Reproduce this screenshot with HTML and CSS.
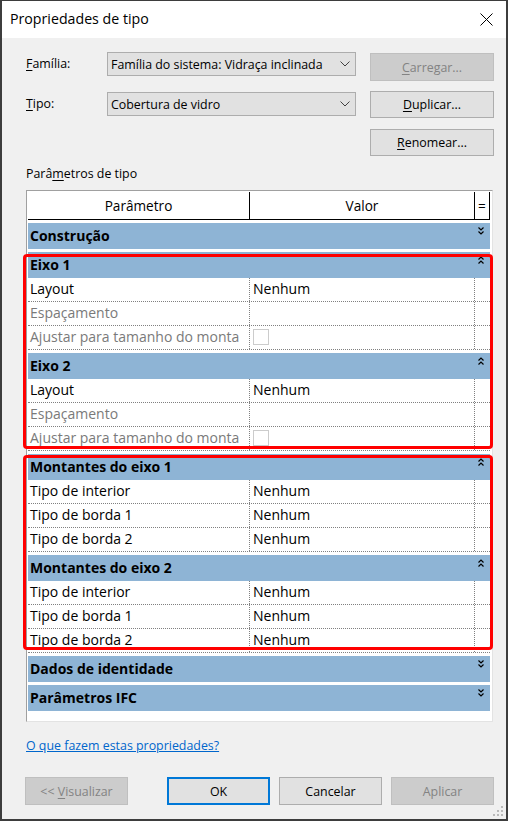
FILE: index.html
```html
<!DOCTYPE html>
<html lang="pt">
<head>
<meta charset="utf-8">
<title>Propriedades de tipo</title>
<link rel="stylesheet" href="styles.css">
</head>
<body>
<div class="window">
  <div class="titlebar">
    <span class="title">Propriedades de tipo</span>
    <svg class="close" width="13" height="13" viewBox="0 0 13 13"><path d="M0.5 0.5 L12.5 12.5 M12.5 0.5 L0.5 12.5" stroke="#000" stroke-width="1" fill="none"/></svg>
  </div>
  <div class="content">
    <div class="form">
      <div class="lbl"><u>F</u>amília:</div>
      <div class="combo"><span>Família do sistema: Vidraça inclinada</span><svg width="10" height="6" viewBox="0 0 10 6"><polyline points="0.5,0.5 5,5 9.5,0.5" stroke="#404040" fill="none"/></svg></div>
      <button class="btn btn-top btn-disabled first"><u>C</u>arregar...</button>

      <div class="lbl lbl2"><u>T</u>ipo:</div>
      <div class="combo combo2"><span>Cobertura de vidro</span><svg width="10" height="6" viewBox="0 0 10 6"><polyline points="0.5,0.5 5,5 9.5,0.5" stroke="#404040" fill="none"/></svg></div>
      <button class="btn btn-top"><u>D</u>uplicar...</button>

      <div></div>
      <div></div>
      <button class="btn btn-top"><u>R</u>enomear...</button>
    </div>

    <div class="section-label">Parâ<u>m</u>etros de tipo</div>

    <div class="table">
      <div class="row head">
        <div class="cell">Parâmetro</div>
        <div class="cell">Valor</div>
        <div class="cell">=</div>
      </div>

      <div class="group"><span>Construção</span><svg class="chev" width="6" height="8" viewBox="0 0 6 8"><polyline points="0.5,0.5 3,3 5.5,0.5"/><polyline points="0.5,4.5 3,7 5.5,4.5"/></svg></div>

      <div class="hl hl1">
        <div class="group"><span>Eixo 1</span><svg class="chev" width="6" height="8" viewBox="0 0 6 8"><polyline points="0.5,3.5 3,1 5.5,3.5"/><polyline points="0.5,7.5 3,5 5.5,7.5"/></svg></div>
        <div class="row"><div class="cell">Layout</div><div class="cell">Nenhum</div><div class="cell"></div></div>
        <div class="row dim"><div class="cell">Espaçamento</div><div class="cell"></div><div class="cell"></div></div>
        <div class="row dim"><div class="cell">Ajustar para tamanho do monta</div><div class="cell"><span class="check"></span></div><div class="cell"></div></div>

        <div class="group"><span>Eixo 2</span><svg class="chev" width="6" height="8" viewBox="0 0 6 8"><polyline points="0.5,3.5 3,1 5.5,3.5"/><polyline points="0.5,7.5 3,5 5.5,7.5"/></svg></div>
        <div class="row"><div class="cell">Layout</div><div class="cell">Nenhum</div><div class="cell"></div></div>
        <div class="row dim"><div class="cell">Espaçamento</div><div class="cell"></div><div class="cell"></div></div>
        <div class="row dim"><div class="cell">Ajustar para tamanho do monta</div><div class="cell"><span class="check"></span></div><div class="cell"></div></div>
      </div>

      <div class="hl hl2">
        <div class="group"><span>Montantes do eixo 1</span><svg class="chev" width="6" height="8" viewBox="0 0 6 8"><polyline points="0.5,3.5 3,1 5.5,3.5"/><polyline points="0.5,7.5 3,5 5.5,7.5"/></svg></div>
        <div class="row"><div class="cell">Tipo de interior</div><div class="cell">Nenhum</div><div class="cell"></div></div>
        <div class="row"><div class="cell">Tipo de borda 1</div><div class="cell">Nenhum</div><div class="cell"></div></div>
        <div class="row"><div class="cell">Tipo de borda 2</div><div class="cell">Nenhum</div><div class="cell"></div></div>

        <div class="group"><span>Montantes do eixo 2</span><svg class="chev" width="6" height="8" viewBox="0 0 6 8"><polyline points="0.5,3.5 3,1 5.5,3.5"/><polyline points="0.5,7.5 3,5 5.5,7.5"/></svg></div>
        <div class="row"><div class="cell">Tipo de interior</div><div class="cell">Nenhum</div><div class="cell"></div></div>
        <div class="row"><div class="cell">Tipo de borda 1</div><div class="cell">Nenhum</div><div class="cell"></div></div>
        <div class="row"><div class="cell">Tipo de borda 2</div><div class="cell">Nenhum</div><div class="cell"></div></div>
      </div>

      <div class="group"><span>Dados de identidade</span><svg class="chev" width="6" height="8" viewBox="0 0 6 8"><polyline points="0.5,0.5 3,3 5.5,0.5"/><polyline points="0.5,4.5 3,7 5.5,4.5"/></svg></div>
      <div class="group"><span>Parâmetros IFC</span><svg class="chev" width="6" height="8" viewBox="0 0 6 8"><polyline points="0.5,0.5 3,3 5.5,0.5"/><polyline points="0.5,4.5 3,7 5.5,4.5"/></svg></div>
    </div>

    <a class="link" href="#">O que fazem estas propriedades?</a>

    <div class="footer">
      <button class="btn btn-disabled">&lt;&lt; <u>V</u>isualizar</button>
      <button class="btn btn-default">OK</button>
      <button class="btn">Cancelar</button>
      <button class="btn btn-disabled">Aplicar</button>
    </div>
  </div>
  <svg class="grip" width="11" height="11" viewBox="0 0 11 11">
    <rect x="8" y="0" width="2" height="2"/>
    <rect x="4" y="4" width="2" height="2"/><rect x="8" y="4" width="2" height="2"/>
    <rect x="0" y="8" width="2" height="2"/><rect x="4" y="8" width="2" height="2"/><rect x="8" y="8" width="2" height="2"/>
  </svg>
</div>
</body>
</html>
```

FILE: styles.css
```css
* { box-sizing: border-box; }
html, body { margin: 0; padding: 0; }
body {
  font-family: "Open Sans", "Noto Sans", sans-serif;
  font-size: 12.4px;
  color: #000;
  background: #f0f0f0;
}
u { text-decoration: underline; text-underline-offset: 2px; }

.window {
  position: relative;
  width: 508px;
  height: 821px;
  border: 2px solid #3d3d3d;
  border-top-width: 1px;
  background: #f0f0f0;
  display: flex;
  flex-direction: column;
}

.titlebar {
  height: 37px;
  background: #fff;
  display: flex;
  align-items: center;
  justify-content: space-between;
  padding: 0 13px 0 8px;
  flex: none;
}
.title { font-size: 14.2px; line-height: 20px; margin-top: -1px; }
.close { display: block; margin-top: 0; }

.content {
  padding: 14px 12px 0 24px;
  display: flex;
  flex-direction: column;
}

.form {
  display: grid;
  grid-template-columns: 81px 249px 138px;
  grid-template-rows: 29px 28px 27px;
  row-gap: 10px;
}
.lbl { line-height: 24px; align-self: start; }
.lbl2 { margin-top: 1px; }
.combo {
  align-self: start;
  height: 24px;
  background: #e1e1e1;
  border: 1px solid #adadad;
  display: flex;
  align-items: center;
  justify-content: space-between;
  padding: 0 5px 0 3px;
  white-space: nowrap;
}
.combo2 { margin-top: 1px; }
.combo svg { display: block; flex: none; }

.btn {
  font: inherit;
  color: #000;
  background: #e1e1e1;
  border: 1px solid #adadad;
  padding: 0;
  margin: 0;
  height: 28px;
  width: 103px;
}
.btn-top {
  justify-self: end;
  align-self: start;
  width: 124px;
  height: 27px;
}
.btn-top.first { height: 28px; margin-top: 1px; }
.btn-disabled {
  background: #cccccc;
  border-color: #bfbfbf;
  color: #838383;
}
.btn-default { border: 2px solid #0078d7; }

.section-label { margin-top: 10px; line-height: 16px; }

.table {
  margin-top: 8px;
  width: 467px;
  height: 532px;
  background: #fff;
  border-top: 1px solid #a0a0a0;
  border-left: 1px solid #a0a0a0;
  border-right: 1px solid #e3e3e3;
  border-bottom: 1px solid #e3e3e3;
  padding: 1px 2px 1px 1px;
}

.row {
  display: grid;
  grid-template-columns: 222px 225px 15px;
  height: 24px;
  border-bottom: 1px dotted #808080;
  font-size: 14px;
}
.row .cell {
  border-right: 1px dotted #808080;
  line-height: 22px;
  padding-left: 2px;
  white-space: nowrap;
  overflow: hidden;
}
.row .cell:last-child { border-right: none; }
.row .cell:nth-child(2) { padding-left: 3px; }
.row.dim .cell { color: #7a7a7a; }

.row.head {
  height: 28px;
  border-bottom: 1px solid #000;
}
.row.head .cell {
  border-right: 1px solid #000;
  text-align: center;
  line-height: 27px;
  padding-left: 0;
  font-size: 13.6px;
}
.row.head .cell:last-child { border-right: 1px solid #000; }

.group {
  margin-top: 3px;
  height: 26px;
  background: #8eb4d5;
  font-weight: bold;
  font-size: 14px;
  display: flex;
  justify-content: space-between;
  align-items: center;
  padding: 0 6px 1px 2px;
}
.chev { align-self: flex-start; margin-top: 4px; display: block; }
.chev polyline { fill: none; stroke: #000; stroke-width: 1.2; }

.check {
  display: inline-block;
  width: 16px;
  height: 16px;
  border: 1px solid #cccccc;
  background: #fff;
  vertical-align: top;
  margin-top: 3px;
}

.hl { position: relative; }
.hl::after {
  content: "";
  position: absolute;
  left: -5px;
  right: -3px;
  border: 3px solid #ff0000;
  border-radius: 4px;
  pointer-events: none;
}
.hl1::after { top: 2px; bottom: 2px; }
.hl2::after { top: 1px; bottom: 3px; }

.link {
  margin-top: 16px;
  line-height: 16px;
  color: #0066cc;
  text-decoration: underline;
  align-self: flex-start;
}

.footer {
  margin-top: 23px;
  margin-left: -1px;
  display: flex;
  gap: 9px;
}
.footer .btn-default { margin-left: 30px; }

.grip {
  position: absolute;
  right: 2px;
  bottom: 2px;
  fill: #b9b9b9;
}
```
